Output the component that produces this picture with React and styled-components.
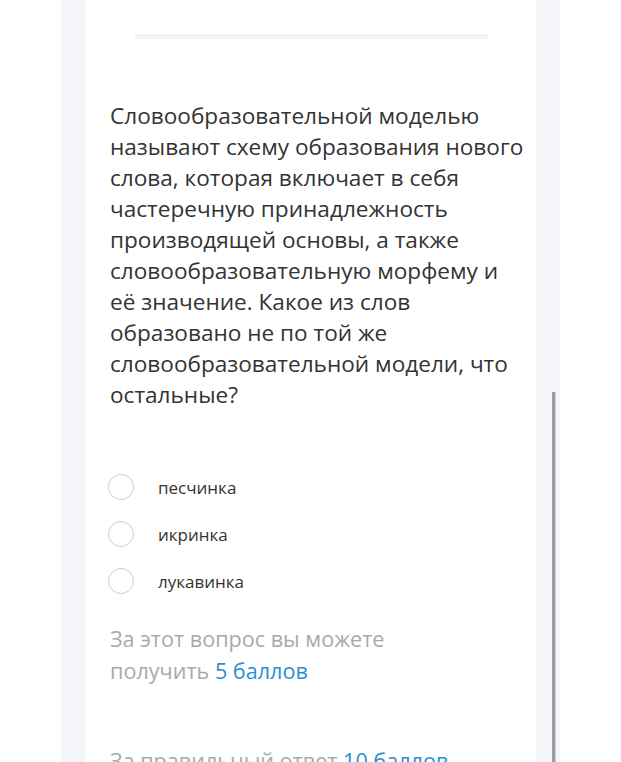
import React from "react";
import styled, { createGlobalStyle } from "styled-components";

const Global = createGlobalStyle`
  html, body { margin: 0; padding: 0; background: #ffffff; }
  body { font-family: "Open Sans", "Noto Sans", sans-serif; overflow: hidden; }
`;

const Page = styled.div`
  position: relative;
  width: 621px;
  height: 762px;
  overflow: hidden;
  background: #ffffff;
`;

const Column = styled.div`
  margin-left: 61px;
  width: 499px;
  height: 100%;
  box-sizing: border-box;
  padding: 0 24px;
  background: #f4f5f8;
`;

const Card = styled.div`
  background: #ffffff;
  height: 100%;
  box-sizing: border-box;
  padding: 34px 0 0 25px;
`;

const Divider = styled.div`
  height: 5px;
  margin: 0 48px 0 25px;
  background: #f3f4f7;
`;

const Question = styled.p`
  margin: 61px 0 0;
  font-size: 22.6px;
  line-height: 31px;
  color: #333333;
  white-space: nowrap;
`;

const Options = styled.div`
  margin-top: 64px;
  display: flex;
  flex-direction: column;
  gap: 21px;
`;

const Option = styled.label`
  display: flex;
  align-items: center;
  gap: 24px;
  margin-left: -2px;
  font-size: 17px;
  color: #333333;
`;

const Radio = styled.span`
  width: 24px;
  height: 24px;
  border-radius: 50%;
  border: 1.5px solid #cfcfcf;
  flex: none;
`;

const Points = styled.p`
  margin: ${(p) => p.$top}px 0 0;
  font-size: 21.6px;
  line-height: 32px;
  color: #a9a9a9;
  white-space: nowrap;
`;

const Accent = styled.span`
  color: #2a8fd4;
`;

const Scrollbar = styled.div`
  position: absolute;
  left: 552px;
  top: 392px;
  width: 3px;
  bottom: 0;
  background: #9d9d9d;
  border-right: 1px solid #cfcfcf;
`;

const lines = [
  "Словообразовательной моделью",
  "называют схему образования нового",
  "слова, которая включает в себя",
  "частеречную принадлежность",
  "производящей основы, а также",
  "словообразовательную морфему и",
  "её значение. Какое из слов",
  "образовано не по той же",
  "словообразовательной модели, что",
  "остальные?",
];

export default function App() {
  return (
    <Page>
      <Global />
      <Column>
        <Card>
          <Divider />
          <Question>
            {lines.map((l, i) => (
              <React.Fragment key={i}>
                {l}
                {i < lines.length - 1 && <br />}
              </React.Fragment>
            ))}
          </Question>
          <Options>
            {["песчинка", "икринка", "лукавинка"].map((o) => (
              <Option key={o}>
                <Radio />
                {o}
              </Option>
            ))}
          </Options>
          <Points $top={29}>
            За этот вопрос вы можете
            <br />
            получить <Accent>5 баллов</Accent>
          </Points>
          <Points $top={58}>
            За правильный ответ <Accent>10 баллов</Accent>
          </Points>
        </Card>
      </Column>
      <Scrollbar />
    </Page>
  );
}
